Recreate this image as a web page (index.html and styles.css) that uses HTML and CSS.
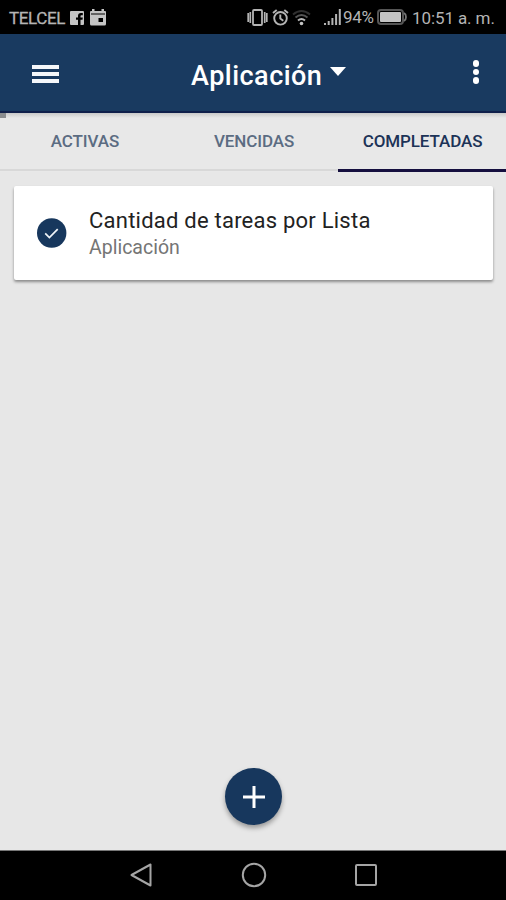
FILE: index.html
```html
<!DOCTYPE html>
<html lang="es">

<head>
    <meta charset="UTF-8">
    <meta name="viewport" content="width=device-width, initial-scale=1.0">
    <title>Aplicación</title>
    <link rel="stylesheet" href="styles.css">
</head>

<body>
    <div class="status-bar">
        <div class="status-left">
            <span class="carrier">TELCEL</span>
            <svg class="icon-facebook" width="14" height="14" viewBox="0 0 14 14">
                <path fill="#c4c4c4" fill-rule="evenodd" d="M1 0h12a1 1 0 0 1 1 1v12a1 1 0 0 1-1 1h-2.500V8.700h2l.3-2.200h-2.300V5.200c0-.7.300-1 1.100-1h1.200V2.100h-1.900C8.900 2.100 8 3.300 8 5v1.500H6v2.200h2V14H1a1 1 0 0 1-1-1V1a1 1 0 0 1 1-1z" />
            </svg>
            <svg class="icon-calendar" width="16" height="17" viewBox="0 0 16 17">
                <path fill="#c4c4c4" fill-rule="evenodd" d="M2 0h2.500v2h7V0H14v2h1a1 1 0 0 1 1 1v12a1.500 1.500 0 0 1-1.500 1.500h-13A1.500 1.500 0 0 1 0 15V3a1 1 0 0 1 1-1h1zM1 4.600v.8h14v-.8zM8.500 9v4H13V9z" />
            </svg>
        </div>
        <div class="status-right">
            <svg class="icon-vibrate" width="21" height="17" viewBox="0 0 21 17" fill="none" stroke="#b4b4b4">
                <rect x="6" y="1" width="9" height="15" rx="1" stroke-width="1.800" />
                <path stroke-width="1.700" d="M3.300 3v11M17.700 3v11M1.200 4v9M19.800 4v9" />
            </svg>
            <svg class="icon-alarm" width="17" height="17" viewBox="0 0 17 17" fill="none" stroke="#b4b4b4" stroke-width="1.900">
                <circle cx="8.500" cy="9.300" r="6.300" />
                <path d="M1 4l3.700-3M16 4l-3.700-3M8.300 5.500v4l3 2.200" />
            </svg>
            <svg class="icon-wifi" width="19" height="17" viewBox="0 0 19 17" fill="none" stroke-width="2">
                <path stroke="#303030" d="M1 5.500q8.500-7 17 0" />
                <path stroke="#555" d="M3.500 8.500q6-5 12 0" />
                <path stroke="#b8b8b8" d="M6 11.500q3.500-3 7 0" />
                <circle cx="9.500" cy="14.500" r="1.800" fill="#c4c4c4" />
            </svg>
            <svg class="icon-signal" width="17" height="16" viewBox="0 0 17 16" stroke="#b4b4b4" stroke-width="2">
                <path d="M1 16v-2M4.700 16v-4M8.400 16V9M12.100 16V5M15.800 16V0" />
            </svg>
            <span class="percent">94%</span>
            <svg class="icon-battery" width="30" height="16" viewBox="0 0 30 16">
                <rect x="1" y="1" width="25" height="14" rx="3" fill="none" stroke="#555" stroke-width="2" />
                <path d="M27 4q2 1 2 4t-2 4" fill="none" stroke="#777" stroke-width="1.800" />
                <rect x="3" y="3" width="21" height="10" rx="1" fill="#c4c4c4" />
            </svg>
            <span class="clock">10:51 a. m.</span>
        </div>
    </div>

    <header class="app-bar">
        <div class="menu">
            <span></span>
            <span></span>
            <span></span>
        </div>
        <h1 class="title">Aplicación</h1>
        <div class="caret"></div>
        <div class="more">
            <span></span>
            <span></span>
            <span></span>
        </div>
    </header>

    <nav class="tabs">
        <div class="progress"></div>
        <a class="tab">ACTIVAS</a>
        <a class="tab">VENCIDAS</a>
        <a class="tab active">COMPLETADAS</a>
    </nav>

    <main class="content">
        <div class="card">
            <svg class="check" width="30" height="30" viewBox="0 0 30 30">
                <circle cx="14.700" cy="15" r="14.700" fill="#17375d" />
                <path d="M8.200 15.300l4.200 4.200 8.300-8.300" fill="none" stroke="#f0f4f8" stroke-width="1.700" />
            </svg>
            <div class="card-text">
                <p class="task">Cantidad de tareas por Lista</p>
                <p class="list">Aplicación</p>
            </div>
        </div>
        <div class="fab">
            <svg width="22" height="22" viewBox="0 0 22 22">
                <path d="M11 0v22M0 11h22" stroke="#fff" stroke-width="3" />
            </svg>
        </div>
    </main>

    <div class="nav-bar">
        <svg class="nav-back" width="24" height="26" viewBox="0 0 24 26">
            <path d="M21.500 2.500v21L2.500 13z" />
        </svg>
        <svg class="nav-home" width="26" height="26" viewBox="0 0 26 26">
            <circle cx="13" cy="13" r="11.200" />
        </svg>
        <svg class="nav-recent" width="22" height="22" viewBox="0 0 22 22">
            <rect x="1" y="1" width="20" height="20" rx="1" />
        </svg>
    </div>
</body>

</html>
```
FILE: styles.css
```css
body {
    margin: 0;
    height: 900px;
    display: flex;
    flex-direction: column;
    background: #e7e7e7;
    font-family: Roboto, sans-serif;
    overflow: hidden;
}

svg {
    display: block;
    flex: none;
}

/* Status bar */
.status-bar {
    height: 34px;
    flex: none;
    display: flex;
    justify-content: space-between;
    background: #000;
    color: #b4b4b4;
    font-size: 17px;
    line-height: 36px;
    white-space: nowrap;
}

.status-left,
.status-right {
    display: flex;
}

.status-left {
    padding-left: 9px;
}

.carrier {
    width: 61px;
    letter-spacing: -0.4px;
    -webkit-text-stroke: 0.3px #b4b4b4;
}

.icon-facebook {
    margin-top: 11px;
}

.icon-calendar {
    margin: 9px 0 0 6px;
}

.icon-vibrate {
    margin-top: 9px;
}

.icon-alarm {
    margin: 9px 0 0 4px;
}

.icon-wifi {
    margin: 9px 0 0 3px;
}

.icon-signal {
    margin: 9px 0 0 13px;
}

.percent {
    width: 34px;
    margin-left: 2px;
    line-height: 35px;
    letter-spacing: -0.3px;
}

.icon-battery {
    margin-top: 9px;
}

.clock {
    width: 83px;
    margin: 0 11px 0 5px;
    letter-spacing: -0.1px;
}

/* App bar */
.app-bar {
    height: 79px;
    flex: none;
    box-sizing: border-box;
    display: flex;
    background: #193a60;
    border-bottom: 2px solid #10204b;
    color: #fff;
}

.menu {
    width: 27px;
    margin: 31px 0 0 32px;
}

.menu span {
    display: block;
    height: 4px;
    margin-bottom: 3px;
    background: #f5f7fa;
}

.title {
    width: 132px;
    margin: 22px 0 0 132px;
    font-size: 27px;
    font-weight: 500;
    line-height: 40px;
    letter-spacing: 0.48px;
    white-space: nowrap;
}

.caret {
    margin: 33px 0 0 7px;
    height: 0;
    border: 8.500px solid transparent;
    border-top: 9px solid #fff;
    border-bottom: 0;
}

.more {
    margin: 26px 27px 0 auto;
}

.more span {
    display: block;
    width: 6.500px;
    height: 6.500px;
    margin-bottom: 2px;
    border-radius: 50%;
    background: #fff;
}

/* Tabs */
.tabs {
    position: relative;
    height: 59px;
    flex: none;
    display: grid;
    grid-template-columns: 169px 169px 168px;
    background: linear-gradient(#c9c9c9, #e8e8e8 5px);
}

.progress {
    position: absolute;
    left: 0;
    top: 0;
    width: 6px;
    height: 5px;
    background: #8b8d8f;
}

.tab {
    box-sizing: border-box;
    height: 58px;
    padding: 17px 0 0 1px;
    border-bottom: 2px solid #d8d8d8;
    color: #5b6c82;
    font-size: 17px;
    font-weight: 500;
    line-height: 22px;
    letter-spacing: -0.1px;
    text-align: center;
}

.tab.active {
    height: 59px;
    border-bottom: 3px solid #150f3f;
    color: #1c3357;
}

/* Content */
.content {
    flex: 1;
    display: flex;
    flex-direction: column;
    align-items: center;
    justify-content: space-between;
    padding: 14px 13px 25px 14px;
    border-bottom: 1px solid #777;
}

.card {
    width: 100%;
    height: 94px;
    display: flex;
    background: #fff;
    border-radius: 2px;
    box-shadow: 0 2px 3px rgba(0, 0, 0, 0.4);
}

.check {
    margin: 32px 0 0 23px;
}

.card-text {
    margin: 20px 0 0 22px;
}

.card-text p {
    margin: 0;
    white-space: nowrap;
}

.task {
    color: #222;
    font-size: 22px;
    line-height: 30px;
    letter-spacing: 0.23px;
}

.list {
    color: #757575;
    font-size: 19.500px;
    line-height: 23px;
}

.fab {
    width: 57px;
    height: 57px;
    display: flex;
    align-items: center;
    justify-content: center;
    border-radius: 50%;
    background: #17375d;
    box-shadow: 0 3px 5px rgba(0, 0, 0, 0.35);
}

/* Navigation bar */
.nav-bar {
    height: 49px;
    flex: none;
    display: flex;
    background: #000;
}

.nav-bar svg {
    fill: none;
    stroke: #a5a5a5;
    stroke-width: 2;
    stroke-linejoin: round;
}

.nav-back {
    margin: 11px 0 0 129px;
}

.nav-home {
    margin: 11px 0 0 88px;
}

.nav-recent {
    margin: 13px 0 0 88px;
}
```
